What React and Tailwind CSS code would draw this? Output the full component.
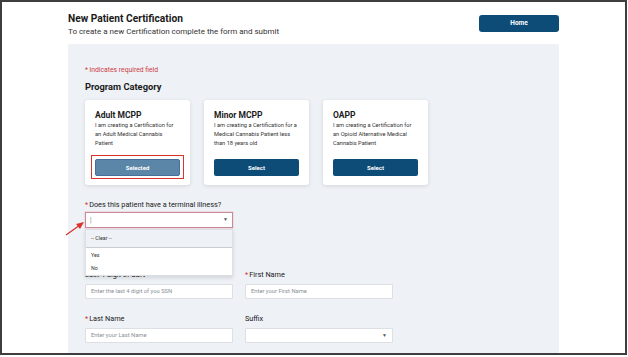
export default function App() {
  const font = { fontFamily: "Roboto, 'Liberation Sans', sans-serif" };
  const Card = ({ title, lines, selected }) => (
    <div className="w-[105px] h-[85px] bg-white rounded-[3px] shadow-[0_1px_4px_rgba(0,0,0,0.12)] pt-[10px] px-[10px] flex flex-col">
      <div className="text-[8.5px] font-bold leading-[11px] text-[#1b1b1b]">{title}</div>
      <div className="text-[5.7px] leading-[9px] text-[#333] whitespace-nowrap">
        {lines.map((l, i) => (
          <div key={i}>{l}</div>
        ))}
      </div>
      <div className="mt-auto mb-[9px] relative">
        {selected && (
          <div className="absolute -left-[4px] -right-[4px] -top-[4px] -bottom-[3px] border-[1.5px] border-[#d8342b]" />
        )}
        <div
          className={`h-[17px] rounded-[2px] flex items-center justify-center text-white text-[6px] font-bold ${
            selected ? "bg-[#5b86a7] border border-[#44709a]" : "bg-[#0e4c78]"
          }`}
        >
          {selected ? "Selected" : "Select"}
        </div>
      </div>
    </div>
  );
  const Label = ({ req, children }) => (
    <div className="text-[7.3px] leading-[10px] text-[#222] whitespace-nowrap">
      {req && <span className="text-[#d0343b] mr-[1px]">*</span>}
      {children}
    </div>
  );
  const Input = ({ ph, caret }) => (
    <div className="mt-[4px] h-[15px] bg-white border border-[#dcdfe4] rounded-[1px] flex items-center px-[5px] text-[5.8px] text-[#8a8f96]">
      <span className="flex-1">{ph}</span>
      {caret && <span className="text-[5px] text-[#555]">▼</span>}
    </div>
  );
  return (
    <div style={font} className="w-[628px] h-[357px] bg-white">
      <div className="relative w-[627px] h-[355px] border-2 border-[#3e3e3e] bg-white overflow-hidden flex flex-col">
        <div className="flex justify-between pl-[66px] pr-[66px] pt-[10px]">
          <div>
            <div className="text-[10.2px] font-bold leading-[13px] text-[#1a1a1a]">New Patient Certification</div>
            <div className="text-[8px] leading-[11px] mt-[1px] text-[#333]">
              To create a new Certification complete the form and submit
            </div>
          </div>
          <div className="mt-[3px] w-[80px] h-[17px] rounded-[3px] bg-[#0e4c78] text-white text-[6.5px] font-bold flex items-center justify-center">
            Home
          </div>
        </div>
        <div className="relative ml-[66px] mt-[7px] w-[491px] flex-1 bg-[#eef1f6] rounded-t-[2px] pl-[17px] pt-[22px]">
          <div className="text-[6.8px] leading-[9px] text-[#cf3a3f]">* indicates required field</div>
          <div className="mt-[6px] text-[9.3px] font-bold leading-[12px] text-[#1a1a1a]">Program Category</div>
          <div className="mt-[7px] flex gap-[14px]">
            <Card title="Adult MCPP" selected lines={["I am creating a Certification for", "an Adult Medical Cannabis", "Patient"]} />
            <Card title="Minor MCPP" lines={["I am creating a Certification for a", "Medical Cannabis Patient less", "than 18 years old"]} />
            <Card title="OAPP" lines={["I am creating a Certification for", "an Opioid Alternative Medical", "Cannabis Patient"]} />
          </div>
          <div className="mt-[15px] w-[148px] relative">
            <Label req>Does this patient have a terminal illness?</Label>
            <div className="mt-[2px] h-[16px] bg-white border border-[#c98a9a] shadow-[0_0_0_1px_#efdde2] flex items-center px-[4px] text-[7px] text-[#333]">
              <span className="flex-1 font-light">|</span>
              <span className="text-[5px] text-[#555]">▼</span>
            </div>
            <div className="absolute left-0 right-0 top-[29px] h-[47px] bg-white border border-[#dcdfe4] shadow-[0_2px_4px_rgba(0,0,0,0.12)] z-10 text-[5.3px] text-[#333]">
              <div className="h-[18px] bg-[#eef2f6] border-b border-[#c9ccd1] flex items-center px-[5px]">-- Clear --</div>
              <div className="h-[13px] flex items-center px-[5px] mt-[1px]">Yes</div>
              <div className="h-[13px] flex items-center px-[5px]">No</div>
            </div>
          </div>
          <div className="mt-[42px] grid grid-cols-[148px_148px] gap-x-[12px]">
            <div>
              <Label>Last 4 digit of SSN</Label>
              <Input ph="Enter the last 4 digit of you SSN" />
            </div>
            <div>
              <Label req>First Name</Label>
              <Input ph="Enter your First Name" />
            </div>
            <div className="mt-[15px]">
              <Label req>Last Name</Label>
              <Input ph="Enter your Last Name" />
            </div>
            <div className="mt-[15px]">
              <Label>Suffix</Label>
              <Input ph="" caret />
            </div>
          </div>
        </div>
        <svg className="absolute left-[62px] top-[217px]" width="24" height="20" viewBox="0 0 24 20">
          <line x1="2" y1="16" x2="16" y2="6" stroke="#d8342b" strokeWidth="1.3" />
          <polygon points="20,3 12,5 16,10" fill="#d8342b" />
        </svg>
      </div>
    </div>
  );
}
